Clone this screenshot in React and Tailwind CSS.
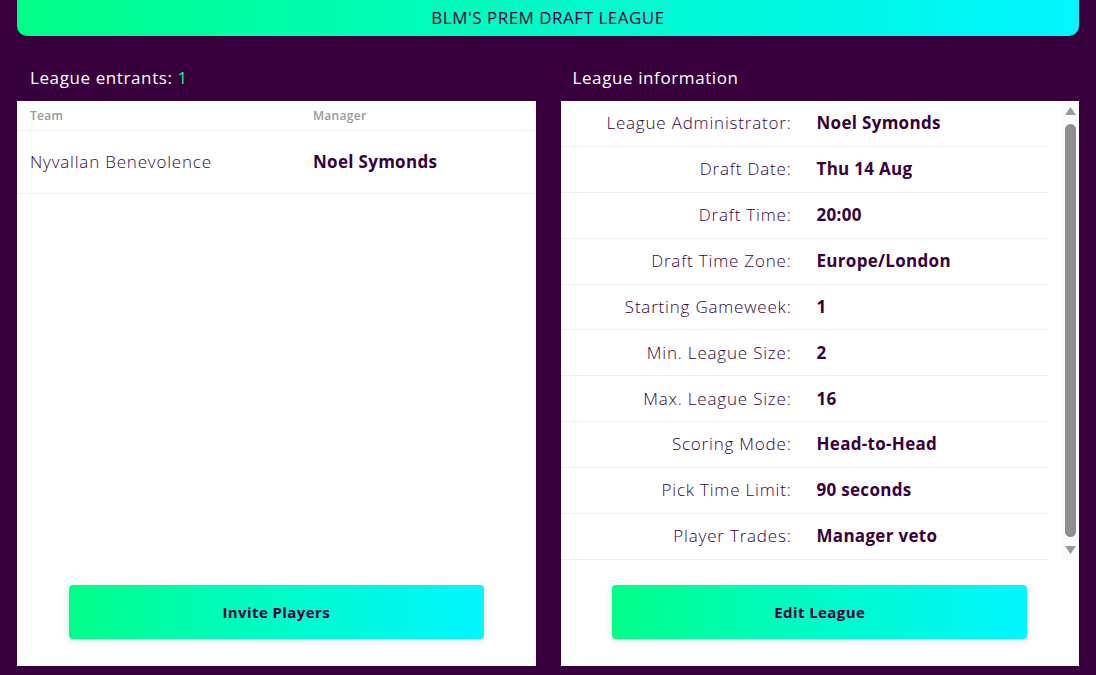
import React from 'react';

const info = [
  ['League Administrator:', 'Noel Symonds'],
  ['Draft Date:', 'Thu 14 Aug'],
  ['Draft Time:', '20:00'],
  ['Draft Time Zone:', 'Europe/London'],
  ['Starting Gameweek:', '1'],
  ['Min. League Size:', '2'],
  ['Max. League Size:', '16'],
  ['Scoring Mode:', 'Head-to-Head'],
  ['Pick Time Limit:', '90 seconds'],
  ['Player Trades:', 'Manager veto'],
];

function GradientButton({ children }) {
  return (
    <button
      type="button"
      className="h-[54px] w-[415px] rounded bg-linear-to-r from-[#00ff87] to-[#04f5ff] text-[15px] font-bold tracking-[0.4px] text-[#37003c] shadow-[0_2px_8px_rgba(0,0,0,0.12)]"
    >
      {children}
    </button>
  );
}

export default function App() {
  return (
    <div
      className="h-[675px] w-[1096px] overflow-hidden bg-[#37003c] px-[17px] text-[#37003c]"
      style={{ fontFamily: '"Open Sans", "Liberation Sans", sans-serif' }}
    >
      <div className="flex h-[36px] items-center justify-center rounded-b-[10px] bg-linear-to-r from-[#00ff87] to-[#04f5ff] text-[17px] tracking-[0.5px] text-[#37003c]">
        BLM'S PREM DRAFT LEAGUE
      </div>

      <div className="mt-[29px] grid grid-cols-2 gap-[25px]">
        <div className="flex flex-col">
          <h2 className="flex h-[36px] items-start px-[13px] text-[17px] font-normal tracking-[0.6px] text-white">
            League entrants:&nbsp;<span className="text-[#00ff87]">1</span>
          </h2>
          <div className="flex h-[565px] flex-col bg-white">
            <div className="grid h-[30px] grid-cols-[283px_1fr] items-center border-b border-[#eeeeee] px-[13px] text-[12px] font-semibold tracking-[0.3px] text-[#999999]">
              <span>Team</span>
              <span>Manager</span>
            </div>
            <div className="grid h-[63px] grid-cols-[283px_1fr] items-center border-b border-[#eeeeee] px-[13px] text-[17px]">
              <span className="font-light tracking-[0.8px]">Nyvallan Benevolence</span>
              <span className="font-bold tracking-[0.3px]">Noel Symonds</span>
            </div>
            <div className="mt-auto mb-[27px] flex justify-center">
              <GradientButton>Invite Players</GradientButton>
            </div>
          </div>
        </div>

        <div className="flex flex-col">
          <h2 className="flex h-[36px] items-start px-[12px] text-[17px] font-normal tracking-[0.6px] text-white">
            League information
          </h2>
          <div className="flex h-[565px] flex-col bg-white">
            <div className="flex h-[459px]">
              <div className="flex-1">
                {info.map(([label, value]) => (
                  <div
                    key={label}
                    className="grid h-[45.9px] grid-cols-[231px_1fr] items-center gap-[25px] border-b border-[#eeeeee] pb-[1px] text-[17px]"
                  >
                    <span className="text-right font-light tracking-[0.8px]">{label}</span>
                    <span className="font-bold tracking-[0.3px]">{value}</span>
                  </div>
                ))}
              </div>
              <div className="ml-[13px] flex w-[17px] flex-col items-center bg-[#fafafa] py-[6px]">
                <svg width="11" height="8" viewBox="0 0 11 8" className="fill-[#9a9a9a]">
                  <path d="M5.5 0 L11 8 L0 8 Z" />
                </svg>
                <div className="my-[9px] w-[11px] flex-1 rounded-full bg-[#8e8e8e]" />
                <svg width="11" height="8" viewBox="0 0 11 8" className="fill-[#9a9a9a]">
                  <path d="M0 0 L11 0 L5.5 8 Z" />
                </svg>
              </div>
            </div>
            <div className="mt-auto mb-[27px] flex justify-center">
              <GradientButton>Edit League</GradientButton>
            </div>
          </div>
        </div>
      </div>
    </div>
  );
}
